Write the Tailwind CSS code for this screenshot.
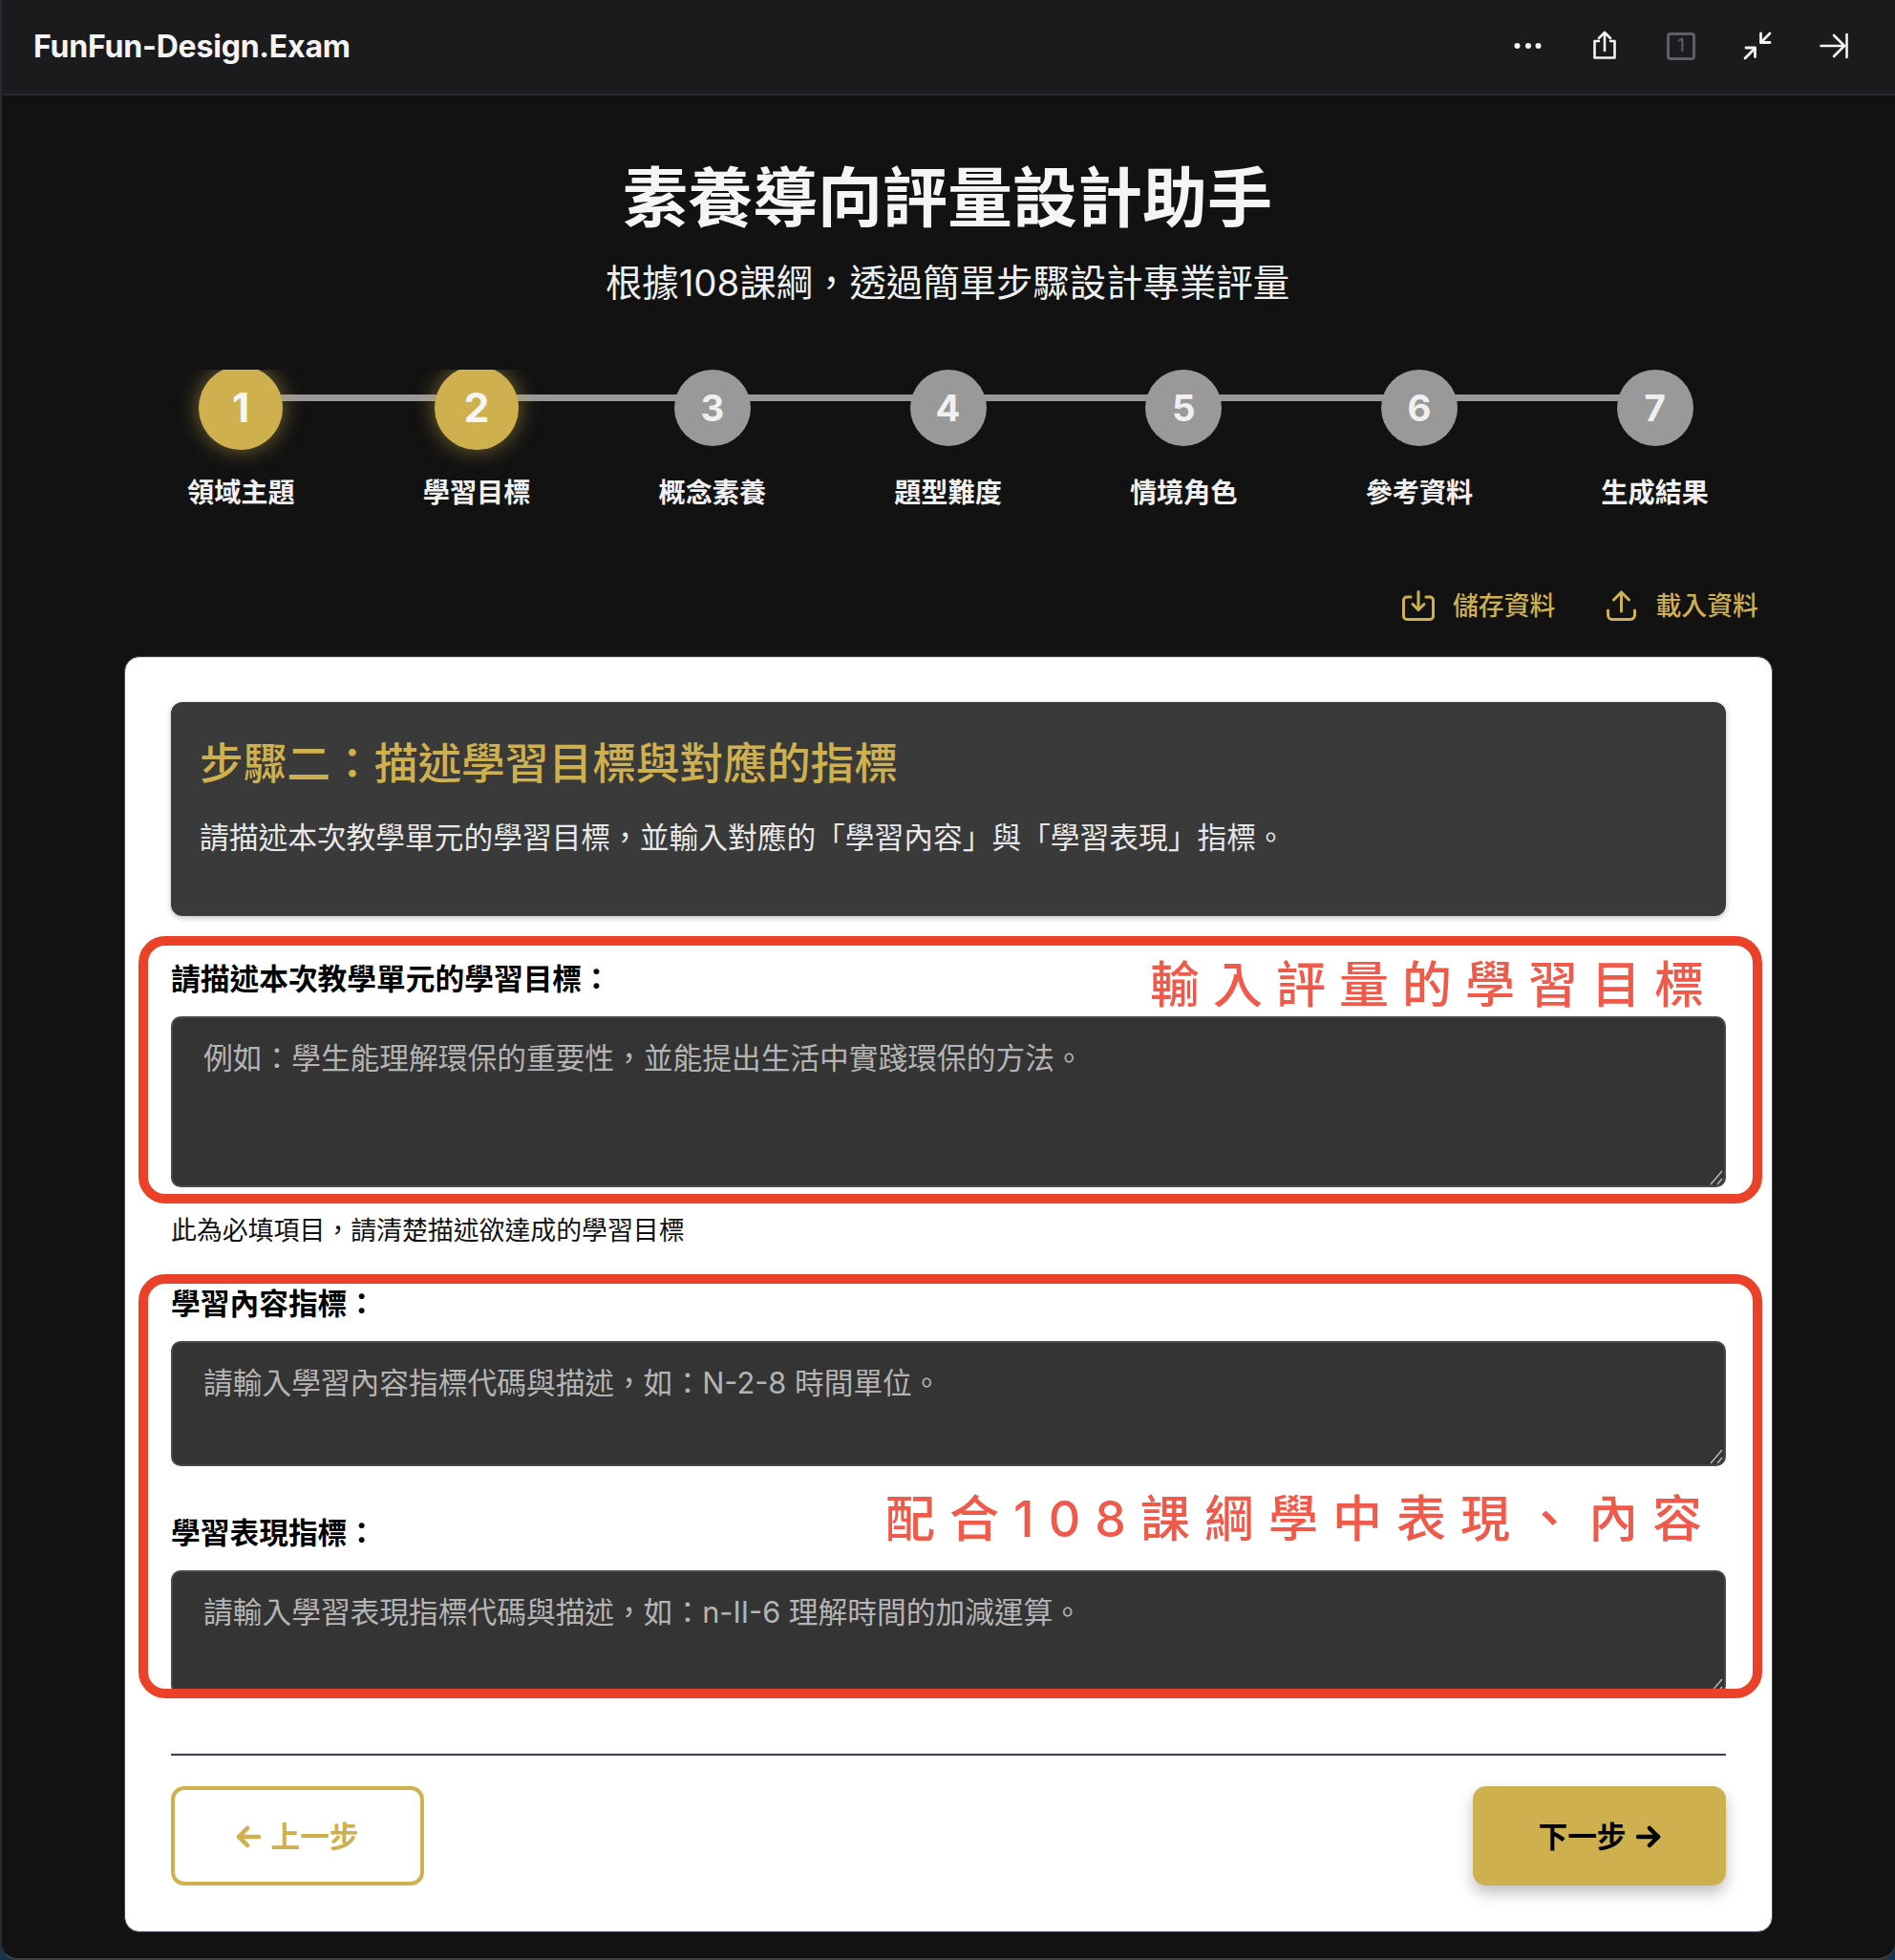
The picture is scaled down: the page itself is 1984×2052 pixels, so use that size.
<!DOCTYPE html>
<html lang="zh-Hant">
<head>
<meta charset="utf-8">
<title>FunFun-Design.Exam</title>
<script src="https://cdn.jsdelivr.net/npm/@tailwindcss/browser@4"></script>
</head>
<body class="bg-[#17344c]">
<div class="relative w-[1984px] h-[2052px] overflow-hidden rounded-b-[18px] border-b-2 border-l-2 border-b-[#3f3f3f] border-l-[#2a2a30] bg-[#121212] font-[family-name:Inter,'Noto_Sans_CJK_TC',sans-serif]">

  <header class="flex h-[100px] -ml-[2px] items-center justify-between border-b-2 border-[#29292d] bg-[#1b1b1e] pl-[35px] pr-[44px]">
    <div class="text-[32px] font-bold leading-none tracking-[-0.200px] text-[#f4f4f5]">FunFun-Design.Exam</div>
    <div class="flex items-center gap-10 pb-[2px]">
      <svg class="h-10 w-10" viewBox="0 0 40 40" fill="#f4f4f5"><circle cx="8.5" cy="20" r="3"/><circle cx="20" cy="20" r="3"/><circle cx="30.500" cy="20" r="3"/></svg>
      <svg class="h-10 w-10" viewBox="0 0 40 40" fill="none" stroke="#f4f4f5" stroke-width="2.6" stroke-linecap="round" stroke-linejoin="round"><path d="M14 15v0h-4.500v17.500h21V15H26"/><path d="M20 25V6.500"/><path d="M14 12l6-6 6 6"/></svg>
      <div class="flex h-[29px] w-[30px] mx-[5px] items-center justify-center rounded-[4px] border-[3px] border-[#5e5e63] text-[18px] font-medium leading-none text-[#5e5e63]">1</div>
      <svg class="h-10 w-10" viewBox="0 0 40 40" fill="none" stroke="#f4f4f5" stroke-width="2.800" stroke-linecap="round" stroke-linejoin="round"><path d="M7 33l10-10"/><path d="M8 22h9.500v9.500"/><path d="M33 7L23.500 16.500"/><path d="M23.500 7v9.500H33"/></svg>
      <svg class="h-10 w-10" viewBox="0 0 40 40" fill="none" stroke="#f4f4f5" stroke-width="2.600" stroke-linecap="round" stroke-linejoin="round"><path d="M6.500 20H29"/><path d="M20 9l11 11-11 11"/><path d="M33.500 8v24"/></svg>
    </div>
  </header>

  <main class="-ml-[2px]">
    <h1 class="mt-[59px] h-[96px] text-center text-[68px] font-bold leading-[96px] text-[#f5f5f5]">素養導向評量設計助手</h1>
    <p class="mt-[14px] h-[54px] text-center text-[38.400px] leading-[54px] text-[#f0f0f0]">根據108課綱，透過簡單步驟設計專業評量</p>

    <div class="relative ml-[129px] mr-[128px] mt-[64px] overflow-hidden">
      <div class="absolute left-[123px] right-[123px] top-[26px] h-[7px] bg-[#999999]"></div>
      <ol class="relative flex">
        <li class="flex flex-1 flex-col items-center">
          <div class="flex h-20 w-20 scale-110 items-center justify-center rounded-full bg-[#cfb04f] text-[38.400px] font-bold leading-none text-[#f5f5f5] shadow-[0_0_20px_rgba(207,176,79,0.55)]">1</div>
          <div class="mt-[29px] h-10 text-[28.160px] font-bold leading-10 text-[#f0f0f0]">領域主題</div>
        </li>
        <li class="flex flex-1 flex-col items-center">
          <div class="flex h-20 w-20 scale-110 items-center justify-center rounded-full bg-[#cfb04f] text-[38.400px] font-bold leading-none text-[#f5f5f5] shadow-[0_0_20px_rgba(207,176,79,0.55)]">2</div>
          <div class="mt-[29px] h-10 text-[28.160px] font-bold leading-10 text-[#f0f0f0]">學習目標</div>
        </li>
        <li class="flex flex-1 flex-col items-center">
          <div class="flex h-20 w-20 items-center justify-center rounded-full bg-[#999999] text-[38.400px] font-bold leading-none text-[#f0f0f0]">3</div>
          <div class="mt-[29px] h-10 text-[28.160px] font-bold leading-10 text-[#f0f0f0]">概念素養</div>
        </li>
        <li class="flex flex-1 flex-col items-center">
          <div class="flex h-20 w-20 items-center justify-center rounded-full bg-[#999999] text-[38.400px] font-bold leading-none text-[#f0f0f0]">4</div>
          <div class="mt-[29px] h-10 text-[28.160px] font-bold leading-10 text-[#f0f0f0]">題型難度</div>
        </li>
        <li class="flex flex-1 flex-col items-center">
          <div class="flex h-20 w-20 items-center justify-center rounded-full bg-[#999999] text-[38.400px] font-bold leading-none text-[#f0f0f0]">5</div>
          <div class="mt-[29px] h-10 text-[28.160px] font-bold leading-10 text-[#f0f0f0]">情境角色</div>
        </li>
        <li class="flex flex-1 flex-col items-center">
          <div class="flex h-20 w-20 items-center justify-center rounded-full bg-[#999999] text-[38.400px] font-bold leading-none text-[#f0f0f0]">6</div>
          <div class="mt-[29px] h-10 text-[28.160px] font-bold leading-10 text-[#f0f0f0]">參考資料</div>
        </li>
        <li class="flex flex-1 flex-col items-center">
          <div class="flex h-20 w-20 items-center justify-center rounded-full bg-[#999999] text-[38.400px] font-bold leading-none text-[#f0f0f0]">7</div>
          <div class="mt-[29px] h-10 text-[28.160px] font-bold leading-10 text-[#f0f0f0]">生成結果</div>
        </li>
      </ol>
    </div>

    <div class="mr-[143px] mt-[78px] flex h-10 items-center justify-end gap-[54px] text-[26.880px] font-medium leading-10 text-[#cfb04f]">
      <div class="flex items-center gap-[19px]">
        <svg class="h-[32px] w-[34px]" viewBox="0 0 34 32" fill="none" stroke="#cfb04f" stroke-width="3" stroke-linecap="round" stroke-linejoin="round"><path d="M9 7H5a3.500 3.500 0 0 0-3.500 3.500V27A3.500 3.500 0 0 0 5 30.500h24a3.500 3.500 0 0 0 3.500-3.500V10.500A3.500 3.500 0 0 0 29 7h-4"/><path d="M17 1.500V20"/><path d="M11 14.500l6 6 6-6"/></svg>
        <span>儲存資料</span>
      </div>
      <div class="flex items-center gap-[20px]">
        <svg class="h-[32px] w-[31px]" viewBox="0 0 31 32" fill="none" stroke="#cfb04f" stroke-width="3" stroke-linecap="round" stroke-linejoin="round"><path d="M15.500 22V2"/><path d="M7.500 10l8-8 8 8"/><path d="M1.500 21v5a4.500 4.500 0 0 0 4.500 4.500h19a4.500 4.500 0 0 0 4.500-4.500v-5"/></svg>
        <span>載入資料</span>
      </div>
    </div>

    <section class="ml-[130px] mt-[33px] w-[1726px] rounded-[16px] border border-[#3d4657] bg-white px-[48px] pb-[48px] pt-[47px]">
      <div class="h-[224px] rounded-[12px] bg-[#3a3a3a] px-[30px] pt-[35px] shadow-[0_2px_6px_rgba(0,0,0,0.25)]">
        <h2 class="h-[60px] text-[45.700px] font-medium leading-[60px] text-[#cfb04f]">步驟二：描述學習目標與對應的指標</h2>
        <p class="mt-[24px] h-[46px] text-[30.720px] leading-[46px] text-[#e8e8e8]">請描述本次教學單元的學習目標，並輸入對應的「學習內容」與「學習表現」指標。</p>
      </div>

      <label class="mt-[44px] block h-[44px] text-[30.720px] font-bold leading-[44px] text-black">請描述本次教學單元的學習目標：</label>
      <div class="relative mt-[17px]">
        <textarea class="block h-[179px] w-full resize-none rounded-[10px] border-2 border-[#4a4a4a] bg-[#343434] px-[32px] pt-[19px] text-[30.720px] leading-[46px] text-[#f0f0f0] placeholder:text-[#b4b4b4]" placeholder="例如：學生能理解環保的重要性，並能提出生活中實踐環保的方法。"></textarea>
        <svg class="absolute bottom-[2px] right-[2px] h-[16px] w-[16px]" viewBox="0 0 16 16" fill="none" stroke="#b8b8b8" stroke-width="1.500"><path d="M2 15L14 1"/><path d="M9 15l5-6"/></svg>
      </div>
      <p class="mt-[27px] h-[36px] text-[26.880px] leading-[36px] text-[#111111]">此為必填項目，請清楚描述欲達成的學習目標</p>

      <label class="mt-[37px] block h-[44px] text-[30.720px] font-bold leading-[44px] text-black">學習內容指標：</label>
      <div class="relative mt-[17px]">
        <textarea class="block h-[131px] w-full resize-none rounded-[10px] border-2 border-[#4a4a4a] bg-[#343434] px-[32px] pt-[19px] text-[30.720px] leading-[46px] text-[#f0f0f0] placeholder:text-[#b4b4b4]" placeholder="請輸入學習內容指標代碼與描述，如：N-2-8 時間單位。"></textarea>
        <svg class="absolute bottom-[2px] right-[2px] h-[16px] w-[16px]" viewBox="0 0 16 16" fill="none" stroke="#b8b8b8" stroke-width="1.500"><path d="M2 15L14 1"/><path d="M9 15l5-6"/></svg>
      </div>

      <label class="mt-[48px] block h-[44px] text-[30.720px] font-bold leading-[44px] text-black">學習表現指標：</label>
      <div class="relative mt-[17px]">
        <textarea class="block h-[131px] w-full resize-none rounded-[10px] border-2 border-[#4a4a4a] bg-[#343434] px-[32px] pt-[19px] text-[30.720px] leading-[46px] text-[#f0f0f0] placeholder:text-[#b4b4b4]" placeholder="請輸入學習表現指標代碼與描述，如：n-II-6 理解時間的加減運算。"></textarea>
        <svg class="absolute bottom-[2px] right-[2px] h-[16px] w-[16px]" viewBox="0 0 16 16" fill="none" stroke="#b8b8b8" stroke-width="1.500"><path d="M2 15L14 1"/><path d="M9 15l5-6"/></svg>
      </div>

      <div class="mt-[61px] h-[2px] bg-[#374151]"></div>

      <div class="mt-[32px] flex justify-between">
        <button class="flex h-[104px] w-[265px] items-center justify-center gap-[10px] rounded-[14px] border-4 border-[#cfb04f] bg-white pt-[2px] text-[30.720px] font-bold text-[#cfb04f]">
          <svg class="h-[28px] w-[26px]" viewBox="0 0 26 28" fill="none" stroke="#cfb04f" stroke-width="4.500" stroke-linecap="round" stroke-linejoin="round"><path d="M24 14H3"/><path d="M12 5l-9 9 9 9"/></svg>
          <span>上一步</span>
        </button>
        <button class="flex h-[104px] w-[265px] items-center justify-center gap-[10px] rounded-[14px] bg-[#cfb04f] pt-[2px] text-[30.720px] font-bold text-black shadow-[0_8px_16px_rgba(0,0,0,0.25)]">
          <span>下一步</span>
          <svg class="h-[28px] w-[26px]" viewBox="0 0 26 28" fill="none" stroke="#000000" stroke-width="4.500" stroke-linecap="round" stroke-linejoin="round"><path d="M2 14h21"/><path d="M14 5l9 9-9 9"/></svg>
        </button>
      </div>
    </section>
  </main>

  <!-- red annotations drawn over the screenshot -->
  <div class="absolute -left-[2px] top-0 h-full w-full">
    <div class="pointer-events-none absolute left-[145px] top-[980px] h-[280px] w-[1700px] rounded-[28px] border-[10px] border-[#ea4128]"></div>
    <div class="pointer-events-none absolute left-[145px] top-[1334px] h-[444px] w-[1700px] rounded-[28px] border-[10px] border-[#ea4128]"></div>
    <div class="absolute right-[198px] top-[996px] whitespace-nowrap text-[52px] font-medium leading-[72px] tracking-[14px] text-[#ef5a4a]" style="margin-right:-14px">輸入評量的學習目標</div>
    <div class="absolute right-[200px] top-[1555px] whitespace-nowrap text-[52px] font-medium leading-[72px] tracking-[15px] text-[#ef5a4a]" style="margin-right:-15px">配合108課綱學中表現、內容</div>
  </div>
</div>
</body>
</html>
